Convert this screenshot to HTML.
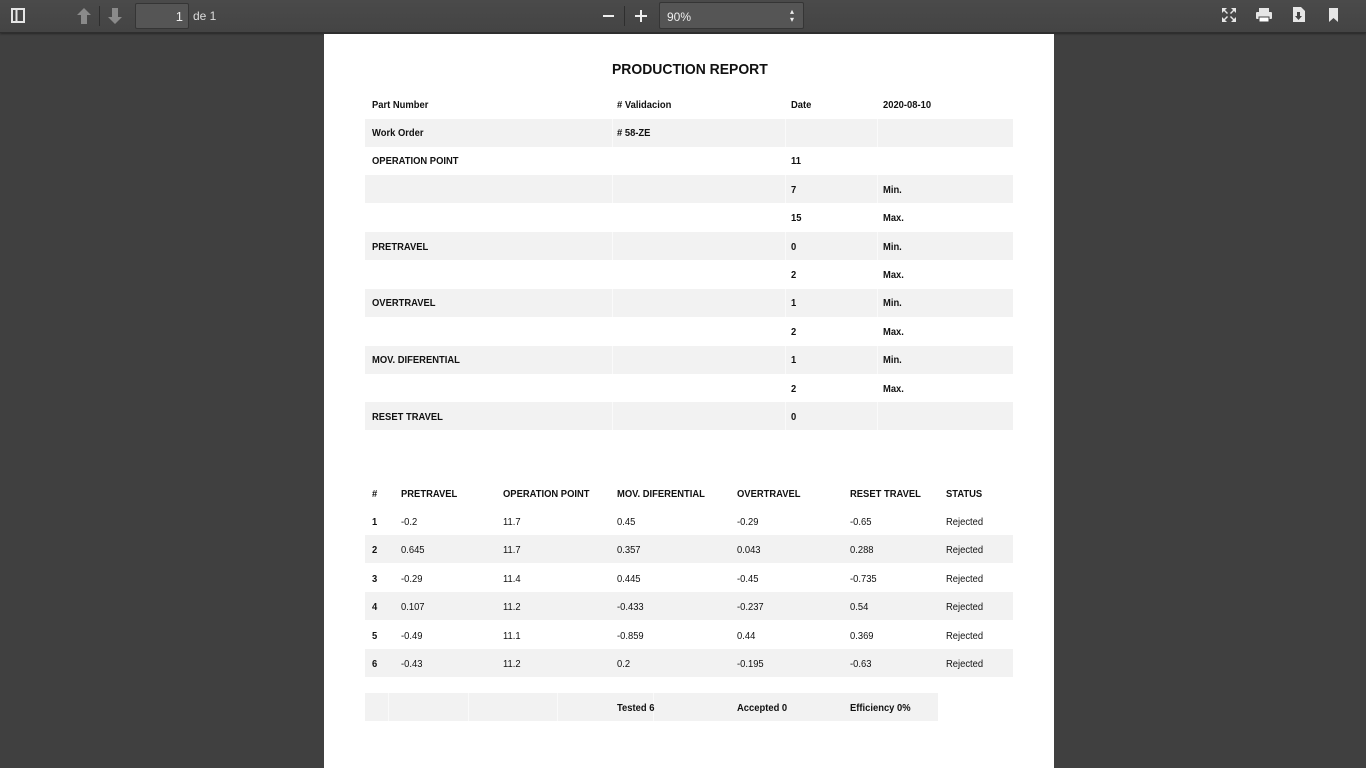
<!DOCTYPE html>
<html><head><meta charset="utf-8"><style>
*{margin:0;padding:0;box-sizing:border-box}
body{width:1366px;height:768px;overflow:hidden;background:#404040;font-family:"Liberation Sans",Arial,sans-serif;position:relative}
#tb{position:absolute;left:0;top:0;width:1366px;height:33px;background:linear-gradient(#4a4a4a,#444);border-bottom:1px solid #2e2e2e;box-shadow:0 1px 2px rgba(0,0,0,.4)}
.a{position:absolute}
#page{position:absolute;left:324px;top:34px;width:730px;height:734px;background:#fff}
.t{position:absolute;font-size:10px;font-weight:bold;color:#111;white-space:nowrap;line-height:12px;transform:scaleX(0.94);transform-origin:0 0}
.n{font-weight:normal}
.band{position:absolute;background:#f2f2f2;height:28px}
.sep{position:absolute;width:1px;background:#fafafa;height:28px}
</style></head><body>
<div id="tb">
 <svg class="a" style="left:11px;top:8px" width="14" height="15"><rect x="1" y="1" width="12" height="13" fill="none" stroke="#e6e6e6" stroke-width="2"/><line x1="5.5" y1="1" x2="5.5" y2="14" stroke="#e6e6e6" stroke-width="2"/></svg>
 <svg class="a" style="left:76px;top:7px" width="16" height="18"><path d="M8 1 L15 8 L11 8 L11 17 L5 17 L5 8 L1 8Z" fill="#8a8a8a"/></svg>
 <div class="a" style="left:99px;top:6px;width:1px;height:20px;background:#2e2e2e"></div>
 <svg class="a" style="left:107px;top:7px" width="16" height="18"><path d="M8 17 L15 10 L11 10 L11 1 L5 1 L5 10 L1 10Z" fill="#8a8a8a"/></svg>
 <div class="a" style="left:135px;top:3px;width:54px;height:26px;background:#555;border:1px solid #353535;border-radius:2px;color:#eee;font-size:13px;text-align:right;padding:5px 5px 0 0">1</div>
 <div class="a" style="left:193px;top:9px;color:#ddd;font-size:12px">de 1</div>
 <div class="a" style="left:603px;top:15px;width:11px;height:2px;background:#eee"></div>
 <div class="a" style="left:624px;top:6px;width:1px;height:20px;background:#2e2e2e"></div>
 <div class="a" style="left:635px;top:15px;width:12px;height:2px;background:#eee"></div>
 <div class="a" style="left:640px;top:10px;width:2px;height:12px;background:#eee"></div>
 <div class="a" style="left:659px;top:2px;width:145px;height:27px;background:#555;border:1px solid #353535;border-radius:2px;color:#eee;font-size:12px;padding:7px 0 0 7px">90%<span style="position:absolute;right:9px;top:5px;font-size:8px;line-height:8px">▴<br>▾</span></div>
 <svg class="a" style="left:1221px;top:7px" width="16" height="16" fill="#e6e6e6"><path d="M1 1h5l-2 2 3 3-1 1-3-3-2 2z M15 1v5l-2-2-3 3-1-1 3-3-2-2z M1 15v-5l2 2 3-3 1 1-3 3 2 2z M15 15h-5l2-2-3-3 1-1 3 3 2-2z"/></svg>
 <svg class="a" style="left:1255px;top:7px" width="18" height="16" fill="#e6e6e6"><rect x="4" y="1" width="10" height="4"/><rect x="1" y="5" width="16" height="7" rx="1"/><rect x="4" y="10" width="10" height="5" fill="#fff" stroke="#444"/></svg>
 <svg class="a" style="left:1292px;top:6px" width="14" height="17"><path d="M1 1h8l4 4v11H1z" fill="#e6e6e6"/><path d="M5 6h3v4h2l-3.5 4L3 10h2z" fill="#444"/></svg>
 <svg class="a" style="left:1328px;top:7px" width="11" height="16"><path d="M1 1h9v14l-4.5-4L1 15z" fill="#e6e6e6"/></svg>
</div>
<div id="page"></div>
<div class="t" style="left:612px;top:61px;font-size:15px;line-height:18px;transform:scaleX(0.93)">PRODUCTION REPORT</div>

<div class="band" style="left:365px;top:119px;width:648px"></div>
<div class="band" style="left:365px;top:175px;width:648px"></div>
<div class="band" style="left:365px;top:232px;width:648px"></div>
<div class="band" style="left:365px;top:289px;width:648px"></div>
<div class="band" style="left:365px;top:346px;width:648px"></div>
<div class="band" style="left:365px;top:402px;width:648px"></div>
<div class="sep" style="left:612px;top:119px"></div><div class="sep" style="left:785px;top:119px"></div><div class="sep" style="left:877px;top:119px"></div>
<div class="sep" style="left:612px;top:175px"></div><div class="sep" style="left:785px;top:175px"></div><div class="sep" style="left:877px;top:175px"></div>
<div class="sep" style="left:612px;top:232px"></div><div class="sep" style="left:785px;top:232px"></div><div class="sep" style="left:877px;top:232px"></div>
<div class="sep" style="left:612px;top:289px"></div><div class="sep" style="left:785px;top:289px"></div><div class="sep" style="left:877px;top:289px"></div>
<div class="sep" style="left:612px;top:346px"></div><div class="sep" style="left:785px;top:346px"></div><div class="sep" style="left:877px;top:346px"></div>
<div class="sep" style="left:612px;top:402px"></div><div class="sep" style="left:785px;top:402px"></div><div class="sep" style="left:877px;top:402px"></div>

<div class="t" style="left:372px;top:100px">Part Number</div>
<div class="t" style="left:617px;top:100px"># Validacion</div>
<div class="t" style="left:791px;top:100px">Date</div>
<div class="t" style="left:883px;top:100px">2020-08-10</div>
<div class="t" style="left:372px;top:128px">Work Order</div>
<div class="t" style="left:617px;top:128px"># 58-ZE</div>
<div class="t" style="left:372px;top:156px">OPERATION POINT</div>
<div class="t" style="left:791px;top:156px">11</div>
<div class="t" style="left:791px;top:185px">7</div><div class="t" style="left:883px;top:185px">Min.</div>
<div class="t" style="left:791px;top:213px">15</div><div class="t" style="left:883px;top:213px">Max.</div>
<div class="t" style="left:372px;top:242px">PRETRAVEL</div>
<div class="t" style="left:791px;top:242px">0</div><div class="t" style="left:883px;top:242px">Min.</div>
<div class="t" style="left:791px;top:270px">2</div><div class="t" style="left:883px;top:270px">Max.</div>
<div class="t" style="left:372px;top:298px">OVERTRAVEL</div>
<div class="t" style="left:791px;top:298px">1</div><div class="t" style="left:883px;top:298px">Min.</div>
<div class="t" style="left:791px;top:327px">2</div><div class="t" style="left:883px;top:327px">Max.</div>
<div class="t" style="left:372px;top:355px">MOV. DIFERENTIAL</div>
<div class="t" style="left:791px;top:355px">1</div><div class="t" style="left:883px;top:355px">Min.</div>
<div class="t" style="left:791px;top:384px">2</div><div class="t" style="left:883px;top:384px">Max.</div>
<div class="t" style="left:372px;top:412px">RESET TRAVEL</div>
<div class="t" style="left:791px;top:412px">0</div>

<div class="band" style="left:365px;top:535px;width:648px"></div>
<div class="band" style="left:365px;top:592px;width:648px"></div>
<div class="band" style="left:365px;top:649px;width:648px"></div>
<div class="t" style="left:372px;top:489px">#</div>
<div class="t" style="left:401px;top:489px">PRETRAVEL</div>
<div class="t" style="left:503px;top:489px">OPERATION POINT</div>
<div class="t" style="left:617px;top:489px">MOV. DIFERENTIAL</div>
<div class="t" style="left:737px;top:489px">OVERTRAVEL</div>
<div class="t" style="left:850px;top:489px">RESET TRAVEL</div>
<div class="t" style="left:946px;top:489px">STATUS</div>

<div class="t" style="left:372px;top:517px">1</div><div class="t n" style="left:401px;top:517px">-0.2</div><div class="t n" style="left:503px;top:517px">11.7</div><div class="t n" style="left:617px;top:517px">0.45</div><div class="t n" style="left:737px;top:517px">-0.29</div><div class="t n" style="left:850px;top:517px">-0.65</div><div class="t n" style="left:946px;top:517px">Rejected</div>
<div class="t" style="left:372px;top:545px">2</div><div class="t n" style="left:401px;top:545px">0.645</div><div class="t n" style="left:503px;top:545px">11.7</div><div class="t n" style="left:617px;top:545px">0.357</div><div class="t n" style="left:737px;top:545px">0.043</div><div class="t n" style="left:850px;top:545px">0.288</div><div class="t n" style="left:946px;top:545px">Rejected</div>
<div class="t" style="left:372px;top:574px">3</div><div class="t n" style="left:401px;top:574px">-0.29</div><div class="t n" style="left:503px;top:574px">11.4</div><div class="t n" style="left:617px;top:574px">0.445</div><div class="t n" style="left:737px;top:574px">-0.45</div><div class="t n" style="left:850px;top:574px">-0.735</div><div class="t n" style="left:946px;top:574px">Rejected</div>
<div class="t" style="left:372px;top:602px">4</div><div class="t n" style="left:401px;top:602px">0.107</div><div class="t n" style="left:503px;top:602px">11.2</div><div class="t n" style="left:617px;top:602px">-0.433</div><div class="t n" style="left:737px;top:602px">-0.237</div><div class="t n" style="left:850px;top:602px">0.54</div><div class="t n" style="left:946px;top:602px">Rejected</div>
<div class="t" style="left:372px;top:631px">5</div><div class="t n" style="left:401px;top:631px">-0.49</div><div class="t n" style="left:503px;top:631px">11.1</div><div class="t n" style="left:617px;top:631px">-0.859</div><div class="t n" style="left:737px;top:631px">0.44</div><div class="t n" style="left:850px;top:631px">0.369</div><div class="t n" style="left:946px;top:631px">Rejected</div>
<div class="t" style="left:372px;top:659px">6</div><div class="t n" style="left:401px;top:659px">-0.43</div><div class="t n" style="left:503px;top:659px">11.2</div><div class="t n" style="left:617px;top:659px">0.2</div><div class="t n" style="left:737px;top:659px">-0.195</div><div class="t n" style="left:850px;top:659px">-0.63</div><div class="t n" style="left:946px;top:659px">Rejected</div>

<div class="band" style="left:365px;top:693px;width:573px"></div>
<div class="sep" style="left:388px;top:693px"></div><div class="sep" style="left:468px;top:693px"></div><div class="sep" style="left:557px;top:693px"></div><div class="sep" style="left:653px;top:693px"></div>
<div class="t" style="left:617px;top:703px">Tested 6</div>
<div class="t" style="left:737px;top:703px">Accepted 0</div>
<div class="t" style="left:850px;top:703px">Efficiency 0%</div>
</body></html>
